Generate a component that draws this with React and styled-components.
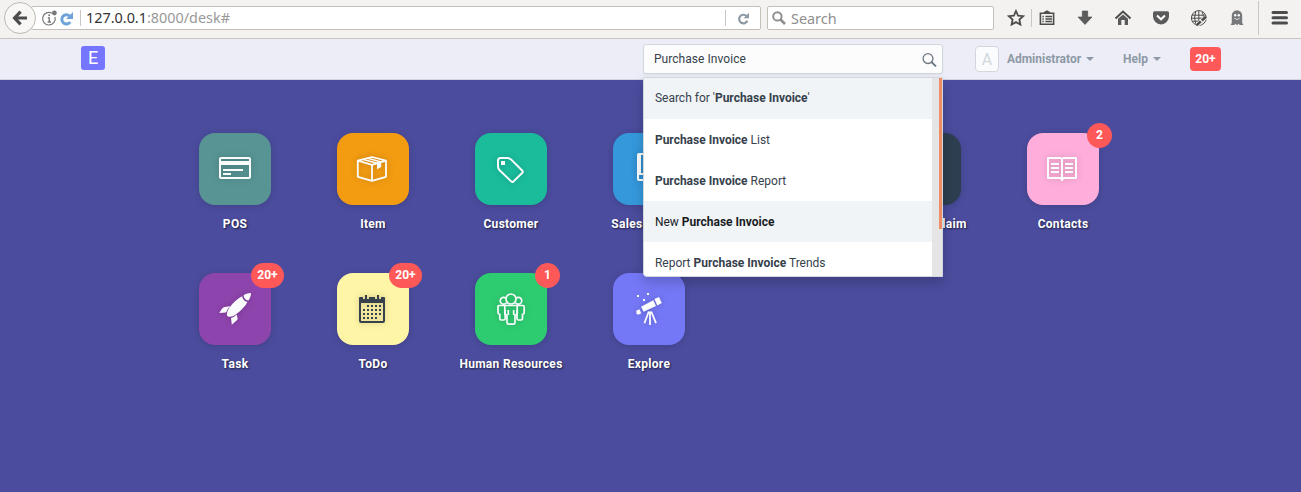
import React from "react";
import styled, { createGlobalStyle, css } from "styled-components";

const Global = createGlobalStyle`
  * { box-sizing: border-box; }
  html, body { margin: 0; background: #4b4c9d; overflow: hidden; }
  body { font-family: Roboto, "Liberation Sans", sans-serif; font-size: 12px; color: #36414c; }
`;

const Page = styled.div`
  height: 492px;
  background: #4b4c9d;
  display: flex;
  flex-direction: column;
`;

/* ---------- browser toolbar ---------- */
const BrowserBar = styled.header`
  height: 39px;
  flex: none;
  display: flex;
  align-items: flex-start;
  background: #f3f2f0;
  border-bottom: 1px solid #cac5bf;
  font-family: "Noto Sans", "Open Sans", sans-serif;
  font-size: 14.4px;
  color: #8f8f8f;
  padding: 2px 0 0 4px;
`;

const BackButton = styled.div`
  width: 32px;
  height: 32px;
  border-radius: 50%;
  border: 1px solid #bdb8b2;
  background: #f8f7f6;
  display: flex;
  align-items: center;
  justify-content: center;
  z-index: 1;
`;

const Field = styled.div`
  height: 24px;
  margin-top: 4px;
  display: flex;
  align-items: center;
  background: #fff;
  border: 1px solid #c5c0ba;
  border-radius: 2px;
`;

const UrlField = styled(Field)`
  width: 730px;
  margin-left: -5px;
  padding-left: 9px;
`;

const SearchField = styled(Field)`
  width: 227px;
  margin-left: 6px;
  padding-left: 4px;
  gap: 5px;
`;

const SiteIcons = styled.span`
  display: flex;
  align-items: center;
  gap: 1px;
  margin-right: 6px;
`;

const Url = styled.span`
  flex: 1;
  margin-left: 5px;
  line-height: 20px;
  color: #999;
  b { font-weight: 400; color: #333; }
`;

const Rule = styled.i`
  width: 1px;
  height: ${(p) => p.$h || 16}px;
  background: #c9c6c3;
`;

const Reload = styled.span`
  width: 34px;
  display: flex;
  justify-content: center;
`;

const Tools = styled.div`
  display: flex;
  align-items: center;
  height: 32px;
  margin-left: 13px;
`;

const Tool = styled.span`
  display: flex;
  width: 18px;
  height: 18px;
  margin-left: ${(p) => p.$before || 0}px;
  margin-right: ${(p) => p.$gap || 0}px;
`;

/* ---------- application navbar ---------- */
const Navbar = styled.nav`
  height: 41px;
  flex: none;
  display: flex;
  align-items: flex-start;
  background: #ecedf6;
  border-bottom: 1px solid #d1d5e2;
  padding: 5px 80px 0 81px;
`;

const Logo = styled.div`
  width: 24px;
  height: 24px;
  margin-top: 2px;
  margin-right: auto;
  border-radius: 3px;
  background: #7575ff;
  color: #fff;
  font-size: 18px;
  line-height: 24px;
  text-align: center;
`;

const SearchBox = styled.div`
  position: relative;
  width: 300px;
  z-index: 5;
`;

const SearchInput = styled.div`
  height: 30px;
  display: flex;
  align-items: center;
  justify-content: space-between;
  padding: 0 5px 0 10px;
  border: 1px solid #d1d8dd;
  border-radius: 3px;
  background: #fcfcfd;
  letter-spacing: 0.06px;
  box-shadow: 0 1px 2px rgba(0, 0, 0, 0.05);
`;

const Dropdown = styled.div`
  position: absolute;
  top: 33px;
  left: 0;
  width: 300px;
  height: 200px;
  display: flex;
  overflow: hidden;
  background: #fff;
  border: 1px solid #d1d8dd;
  border-radius: 0 0 0 4px;
  box-shadow: 0 6px 12px rgba(0, 0, 0, 0.175);
`;

const Results = styled.div`
  flex: 1;
`;

const Result = styled.div`
  height: 41px;
  padding-left: 11px;
  line-height: 43px;
  white-space: nowrap;
  color: ${(p) => (p.$active ? "#1a1c1f" : "#36414c")};
  background: ${(p) => (p.$shaded ? "#f0f4f7" : "#fff")};
  b { font-weight: 700; }
  &:first-child { line-height: 41px; }
`;

const ScrollTrack = styled.div`
  width: 10px;
  background: #e5e5e5;
  display: flex;
  justify-content: flex-end;
`;

const ScrollThumb = styled.div`
  width: 3px;
  height: 151px;
  background: #f08d66;
`;

const Avatar = styled.div`
  width: 24px;
  height: 26px;
  margin: 2px 8px 0 32px;
  border: 1px solid #d1d8dd;
  border-radius: 4px;
  background: #fafbfc;
  color: #d1d8dd;
  font-size: 16px;
  line-height: 25px;
  text-align: center;
`;

const NavLink = styled.div`
  display: flex;
  align-items: center;
  gap: 5px;
  height: 30px;
  margin-right: 29px;
  color: #8d99a6;
  font-weight: 700;
  &::after {
    content: "";
    border: 4px solid transparent;
    border-top-color: currentColor;
    border-bottom: 0;
  }
`;

const Notice = styled.div`
  width: 31px;
  height: 24px;
  margin-top: 3px;
  border-radius: 4px;
  background: #ff5858;
  color: #fff;
  font-weight: 700;
  line-height: 24px;
  text-align: center;
`;

/* ---------- desktop ---------- */
const Desk = styled.main`
  display: grid;
  grid-template-columns: repeat(7, 138px);
  grid-auto-rows: 140px;
  padding: 53px 0 0 166px;
`;

const Shortcut = styled.div`
  display: flex;
  flex-direction: column;
  align-items: center;
  grid-column: ${(p) => p.$col || "auto"};
`;

const Tile = styled.div`
  position: relative;
  width: 72px;
  height: 72px;
  border-radius: 16px;
  background: ${(p) => p.$bg};
  color: ${(p) => p.$fg || "#fafbfc"};
  box-shadow: 0 1px 6px rgba(30, 30, 60, 0.22);
  > svg {
    display: block;
    filter: drop-shadow(0 0 3px rgba(0, 0, 0, 0.2));
  }
`;

const Count = styled.span`
  position: absolute;
  top: -10px;
  right: -13px;
  width: ${(p) => (p.$wide ? 33 : 25)}px;
  height: 25px;
  border-radius: 13px;
  background: #ff5858;
  color: #fff;
  font-weight: 700;
  line-height: 24px;
  text-align: center;
`;

const Label = styled.div`
  margin-top: 11px;
  line-height: 16px;
  white-space: nowrap;
  font-weight: 700;
  letter-spacing: 0.3px;
  color: #fff;
  text-shadow: 1px 1px 2px rgba(0, 0, 0, 0.6);
`;

const Glyph = ({ children, w = 2 }) => (
  <svg width="72" height="72" viewBox="0 0 72 72" fill="none" stroke="currentColor" strokeWidth={w}>
    {children}
  </svg>
);

const PosIcon = () => (
  <Glyph>
    <rect x="21" y="25" width="30" height="20" rx="1" />
    <path d="M21 30H51" strokeWidth="4" />
    <path d="M24 37H44M24 41H32" />
  </Glyph>
);

const BoxIcon = () => (
  <Glyph w={1.8}>
    <path d="M20.8 27.6L35 24L49 27.6V43.8L35 47.8L20.8 43.8ZM20.8 27.6L35 31.8L49 27.6M35 31.8V47.8" strokeLinejoin="round" />
    <path d="M25.5 26.2L40 30.2M30 25L44 29" strokeWidth="1.5" />
    <path d="M40 29.8L44.2 28.6V34L42 35.2L40 36.2Z" fill="currentColor" stroke="none" />
  </Glyph>
);

const TagIcon = () => (
  <Glyph>
    <path d="M25.5 25H32.5Q34.5 25 36 26.4L47.4 37.8Q48.3 38.8 47.4 39.7L38.3 48.6Q37.3 49.4 36.4 48.6L24.4 37Q23 35.6 23 33.6V27.5Q23 25 25.5 25Z" />
    <rect x="26" y="28" width="4" height="4" fill="currentColor" stroke="none" />
  </Glyph>
);

const LedgerIcon = () => (
  <Glyph>
    <path d="M46 47H26Q25 47 25 46V22Q25 21 26 21H46V47M25 41H46" />
    <path d="M27 20V42" />
  </Glyph>
);

const BookIcon = () => (
  <Glyph>
    <path d="M21 25H33.5L35 26L36.5 25H49V45H36.5L35 46.5L33.5 45H21ZM35 25.5V48" strokeLinejoin="round" />
    <path d="M24 31H32M24 35H32M24 39H32M38 31H46M38 35H46M38 39H46" />
  </Glyph>
);

const RocketIcon = () => (
  <svg width="72" height="72" viewBox="0 0 72 72" fill="currentColor">
    <path d="M52 20C50 20 46.5 20.8 44.6 22.3Q44.8 26.8 49.4 27.6C51.2 25.5 52 22 52 20Z" />
    <path d="M43.2 23.2Q43.8 28 48.4 28.9C46.5 33 42 37.5 37 41.3Q33 44.5 29 43.6L27.8 42.2Q27.4 38.5 30.5 34.5C34 29.5 38.5 25.5 43.2 23.2Z" />
    <path d="M31.4 33.2L25.5 34Q23.8 34.3 22.8 36L20.3 40L27 39.4Q28.2 36 31.4 33.2Z" />
    <path d="M37.6 41.4L38.6 45Q38.8 46.5 37.6 47.6L32.8 51.8L32 45Q35 44.4 37.6 41.4Z" />
  </svg>
);

const dots = [];
for (let r = 0; r < 4; r++)
  for (let c = 0; c < 5; c++)
    if (!(r === 0 && c === 0) && !(r === 3 && c === 4)) dots.push([26 + c * 4, 32 + r * 4]);

const CalendarIcon = () => (
  <Glyph>
    <rect x="23" y="27" width="24" height="22" rx="1" />
    <path d="M22 28V25Q22 24 23 24H26V28H32V24H38V28H44V24H47Q48 24 48 25V30H22Z" fill="currentColor" stroke="none" />
    <path d="M29 22V26.5M41 22V26.5" />
    {dots.map(([x, y]) => (
      <rect key={`${x}-${y}`} x={x} y={y} width="2" height="2" fill="currentColor" stroke="none" />
    ))}
  </Glyph>
);

const PeopleIcon = () => (
  <Glyph w={1.7}>
    <circle cx="36" cy="26" r="5" />
    <path d="M31.5 29.6A3.4 3.4 0 1 1 30.8 25.2M40.5 29.6A3.4 3.4 0 1 0 41.2 25.2" />
    <path d="M23 33.5Q23 32.5 24 32.5H48Q49.2 32.5 49.2 33.8V39.5Q49.2 41 47.5 41.5V45.5Q47.5 47 46 47H43.5Q42 47 42 45.5V37M23 33.5V39.5Q23 41 24.8 41.5V45.5Q24.8 47 26.2 47H28.6Q30.2 47 30.2 45.5V37" />
    <path d="M29.8 32.5V40.5Q29.8 42 32 42V49.5Q32 51.2 33.5 51.2H38.5Q40 51.2 40 49.5V42Q42.2 42 42.2 40.5V32.5M33.3 37V42M38.7 37V42" />
  </Glyph>
);

const TelescopeIcon = () => (
  <Glyph>
    <g fill="currentColor" stroke="none">
      <rect x="24" y="22" width="2" height="2" />
      <rect x="34" y="20" width="2" height="2" />
      <rect x="30" y="26" width="2" height="2" />
      <path d="M41.4 26L46 24L48.8 30L44.3 32.4Z" />
      <path d="M28 33.8L40.3 27.2L43 33L30.6 38.8Z" />
      <path d="M23.2 37.8L26.4 36.2L28.3 40.2L25.2 41.8L23.6 41Z" />
    </g>
    <path d="M35.8 38.5L31.4 50.2M37 38.5V52M38.2 38.5L43 50.2" strokeWidth="1.8" />
  </Glyph>
);

const apps = [
  { label: "POS", bg: "#589494", icon: <PosIcon /> },
  { label: "Item", bg: "#f39c12", icon: <BoxIcon /> },
  { label: "Customer", bg: "#1abc9c", icon: <TagIcon /> },
  { label: "Sales Invoice", bg: "#3498db", icon: <LedgerIcon /> },
  { label: "Expense Claim", bg: "#2c3e50", col: 6 },
  { label: "Contacts", bg: "#ffaedb", icon: <BookIcon />, count: "2" },
  { label: "Task", bg: "#8e44ad", icon: <RocketIcon />, count: "20+" },
  { label: "ToDo", bg: "#fff5a7", fg: "#36414c", icon: <CalendarIcon />, count: "20+" },
  { label: "Human Resources", bg: "#2ecc71", icon: <PeopleIcon />, count: "1" },
  { label: "Explore", bg: "#7578f6", icon: <TelescopeIcon /> },
];

const Svg = ({ size = 18, children, ...p }) => (
  <svg width={size} height={size} viewBox={`0 0 ${size} ${size}`} fill="none" stroke="#4c4c4c" {...p}>
    {children}
  </svg>
);

const MenuIcon = styled(Svg)`
  flex: none;
`;

export default function App() {
  return (
    <Page>
      <Global />
      <BrowserBar>
        <BackButton>
          <Svg size={16} strokeWidth="3.2">
            <path d="M8.6 1.6L2.6 8L8.6 14.4M3 8H15" />
          </Svg>
        </BackButton>
        <UrlField>
          <SiteIcons>
            <Svg size={17} stroke="#777" strokeWidth="1.2">
              <path d="M11 3.2A6.3 6.3 0 1 0 14 7" />
              <path d="M8.3 7.5V12M6.8 7.6H8.3M6.6 12H10" strokeWidth="1.4" />
              <circle cx="8.2" cy="5.2" r="1" fill="#777" stroke="none" />
              <circle cx="13.4" cy="3" r="2.4" fill="#777" stroke="none" />
            </Svg>
            <Svg size={15} stroke="#6fa3d8" strokeWidth="3">
              <path d="M10.6 5A4.6 4.6 0 1 0 11.2 11" />
              <path d="M14 1V8H7Z" fill="#6fa3d8" stroke="none" />
            </Svg>
          </SiteIcons>
          <Rule />
          <Url><b>127.0.0.1</b>:8000/desk#</Url>
          <Rule />
          <Reload>
            <Svg size={13} stroke="#8d99a3" strokeWidth="2.2">
              <path d="M9.5 4A4.3 4.3 0 1 0 10.4 8.8" />
              <path d="M12 0.8V6.2H6.6Z" fill="#8d99a3" stroke="none" />
            </Svg>
          </Reload>
        </UrlField>
        <SearchField>
          <Svg size={14} stroke="#8e8e8e" strokeWidth="2">
            <circle cx="5.4" cy="5.4" r="4.2" />
            <path d="M8.5 8.5L13 13" strokeWidth="2.6" />
          </Svg>
          Search
        </SearchField>
        <Tools>
          <Tool $gap={6}>
            <Svg strokeWidth="1.8">
              <path d="M9 2L11.1 6.6L16.1 7.2L12.4 10.6L13.4 15.6L9 13.1L4.6 15.6L5.6 10.6L1.9 7.2L6.9 6.6Z" />
            </Svg>
          </Tool>
          <Rule $h={18} />
          <Tool $before={6} $gap={20}>
            <Svg strokeWidth="1.6" viewBox="-3.4 0 18 18">
              <path d="M-1 4.2H12.2V15.2H-1ZM1 7.5H2.4M1 10H2.4M1 12.5H2.4M4 7.5H10.6M4 10H10.6M4 12.5H10.6" />
              <path d="M2.5 4.5V3L5.6 1.2L8.7 3V4.5Z" fill="#4c4c4c" stroke="none" />
            </Svg>
          </Tool>
          <Tool $gap={20}>
            <Svg>
              <path d="M6.3 2H11.7V8H16L9 15.5L2 8H6.3Z" fill="#5c5c5c" stroke="#4c4c4c" strokeWidth=".6" />
            </Svg>
          </Tool>
          <Tool $gap={20}>
            <Svg>
              <path d="M1.5 9.5L9 2.5L16.5 9.5" strokeWidth="2" />
              <path d="M4 9.8L9 5.4L14 9.8V16H10.7V11H7.3V16H4Z" fill="#5a5a5a" stroke="none" />
            </Svg>
          </Tool>
          <Tool $gap={20}>
            <Svg>
              <path d="M2.5 2.2H15.5Q17 2.2 17 3.7V7.6A8 7.8 0 0 1 1 7.6V3.7Q1 2.2 2.5 2.2Z" fill="#5a5a5a" stroke="none" />
              <path d="M5 6.5L9 10.3L13 6.5" stroke="#fff" strokeWidth="2" />
            </Svg>
          </Tool>
          <Tool $gap={20}>
            <Svg strokeWidth="1">
              <circle cx="8.8" cy="9" r="7.4" />
              <path d="M2 6.2H15.5M1.6 9.2H16M2.6 12.2H10M8.8 2V16M5.6 3Q3.4 9 5.8 15M12 3Q13.8 6 13.5 9" />
              <path d="M6.5 16.5L16 8" stroke="#f3f2f0" strokeWidth="4" />
              <path d="M6.4 16.4L10.8 12.4M11.8 11.4L16 7.8" strokeWidth="2.6" />
            </Svg>
          </Tool>
          <Tool $gap={12}>
            <Svg>
              <path d="M3.8 14V6.6A5.2 5.4 0 0 1 14.2 6.6V14L15.5 16H11.8L10.6 14.8L9 16.2L7.4 14.8L6.2 16H2.5Z" fill="#77787a" stroke="none" />
              <circle cx="7.2" cy="6.2" r="1.2" fill="#fff" stroke="none" />
              <circle cx="10.8" cy="6.2" r="1.2" fill="#fff" stroke="none" />
              <path d="M6.3 9.2Q9 12 11.7 9.2" stroke="#ddd" />
            </Svg>
          </Tool>
          <Rule $h={34} />
          <Tool>
            <MenuIcon width="32" viewBox="0 0 32 18">
              <path d="M14 3.6H27.5M14 8.8H27.5M14 14H27.5" strokeWidth="3" strokeLinecap="round" />
            </MenuIcon>
          </Tool>
        </Tools>
      </BrowserBar>

      <Navbar>
        <Logo>E</Logo>
        <SearchBox>
          <SearchInput>
            Purchase Invoice
            <Svg size={16} stroke="#6c7680" strokeWidth="1.3">
              <circle cx="7" cy="7.6" r="4.9" />
              <path d="M10.4 11L15 15.4" strokeWidth="1.8" />
            </Svg>
          </SearchInput>
          <Dropdown>
            <Results>
              <Result $shaded>Search for '<b>Purchase Invoice</b>'</Result>
              <Result><b>Purchase Invoice</b> List</Result>
              <Result><b>Purchase Invoice</b> Report</Result>
              <Result $shaded $active>New <b>Purchase Invoice</b></Result>
              <Result>Report <b>Purchase Invoice</b> Trends</Result>
            </Results>
            <ScrollTrack><ScrollThumb /></ScrollTrack>
          </Dropdown>
        </SearchBox>
        <Avatar>A</Avatar>
        <NavLink>Administrator</NavLink>
        <NavLink>Help</NavLink>
        <Notice>20+</Notice>
      </Navbar>

      <Desk>
        {apps.map((a) => (
          <Shortcut key={a.label} $col={a.col}>
            <Tile $bg={a.bg} $fg={a.fg}>
              {a.icon}
              {a.count && <Count $wide={a.count.length > 1}>{a.count}</Count>}
            </Tile>
            <Label>{a.label}</Label>
          </Shortcut>
        ))}
      </Desk>
    </Page>
  );
}
